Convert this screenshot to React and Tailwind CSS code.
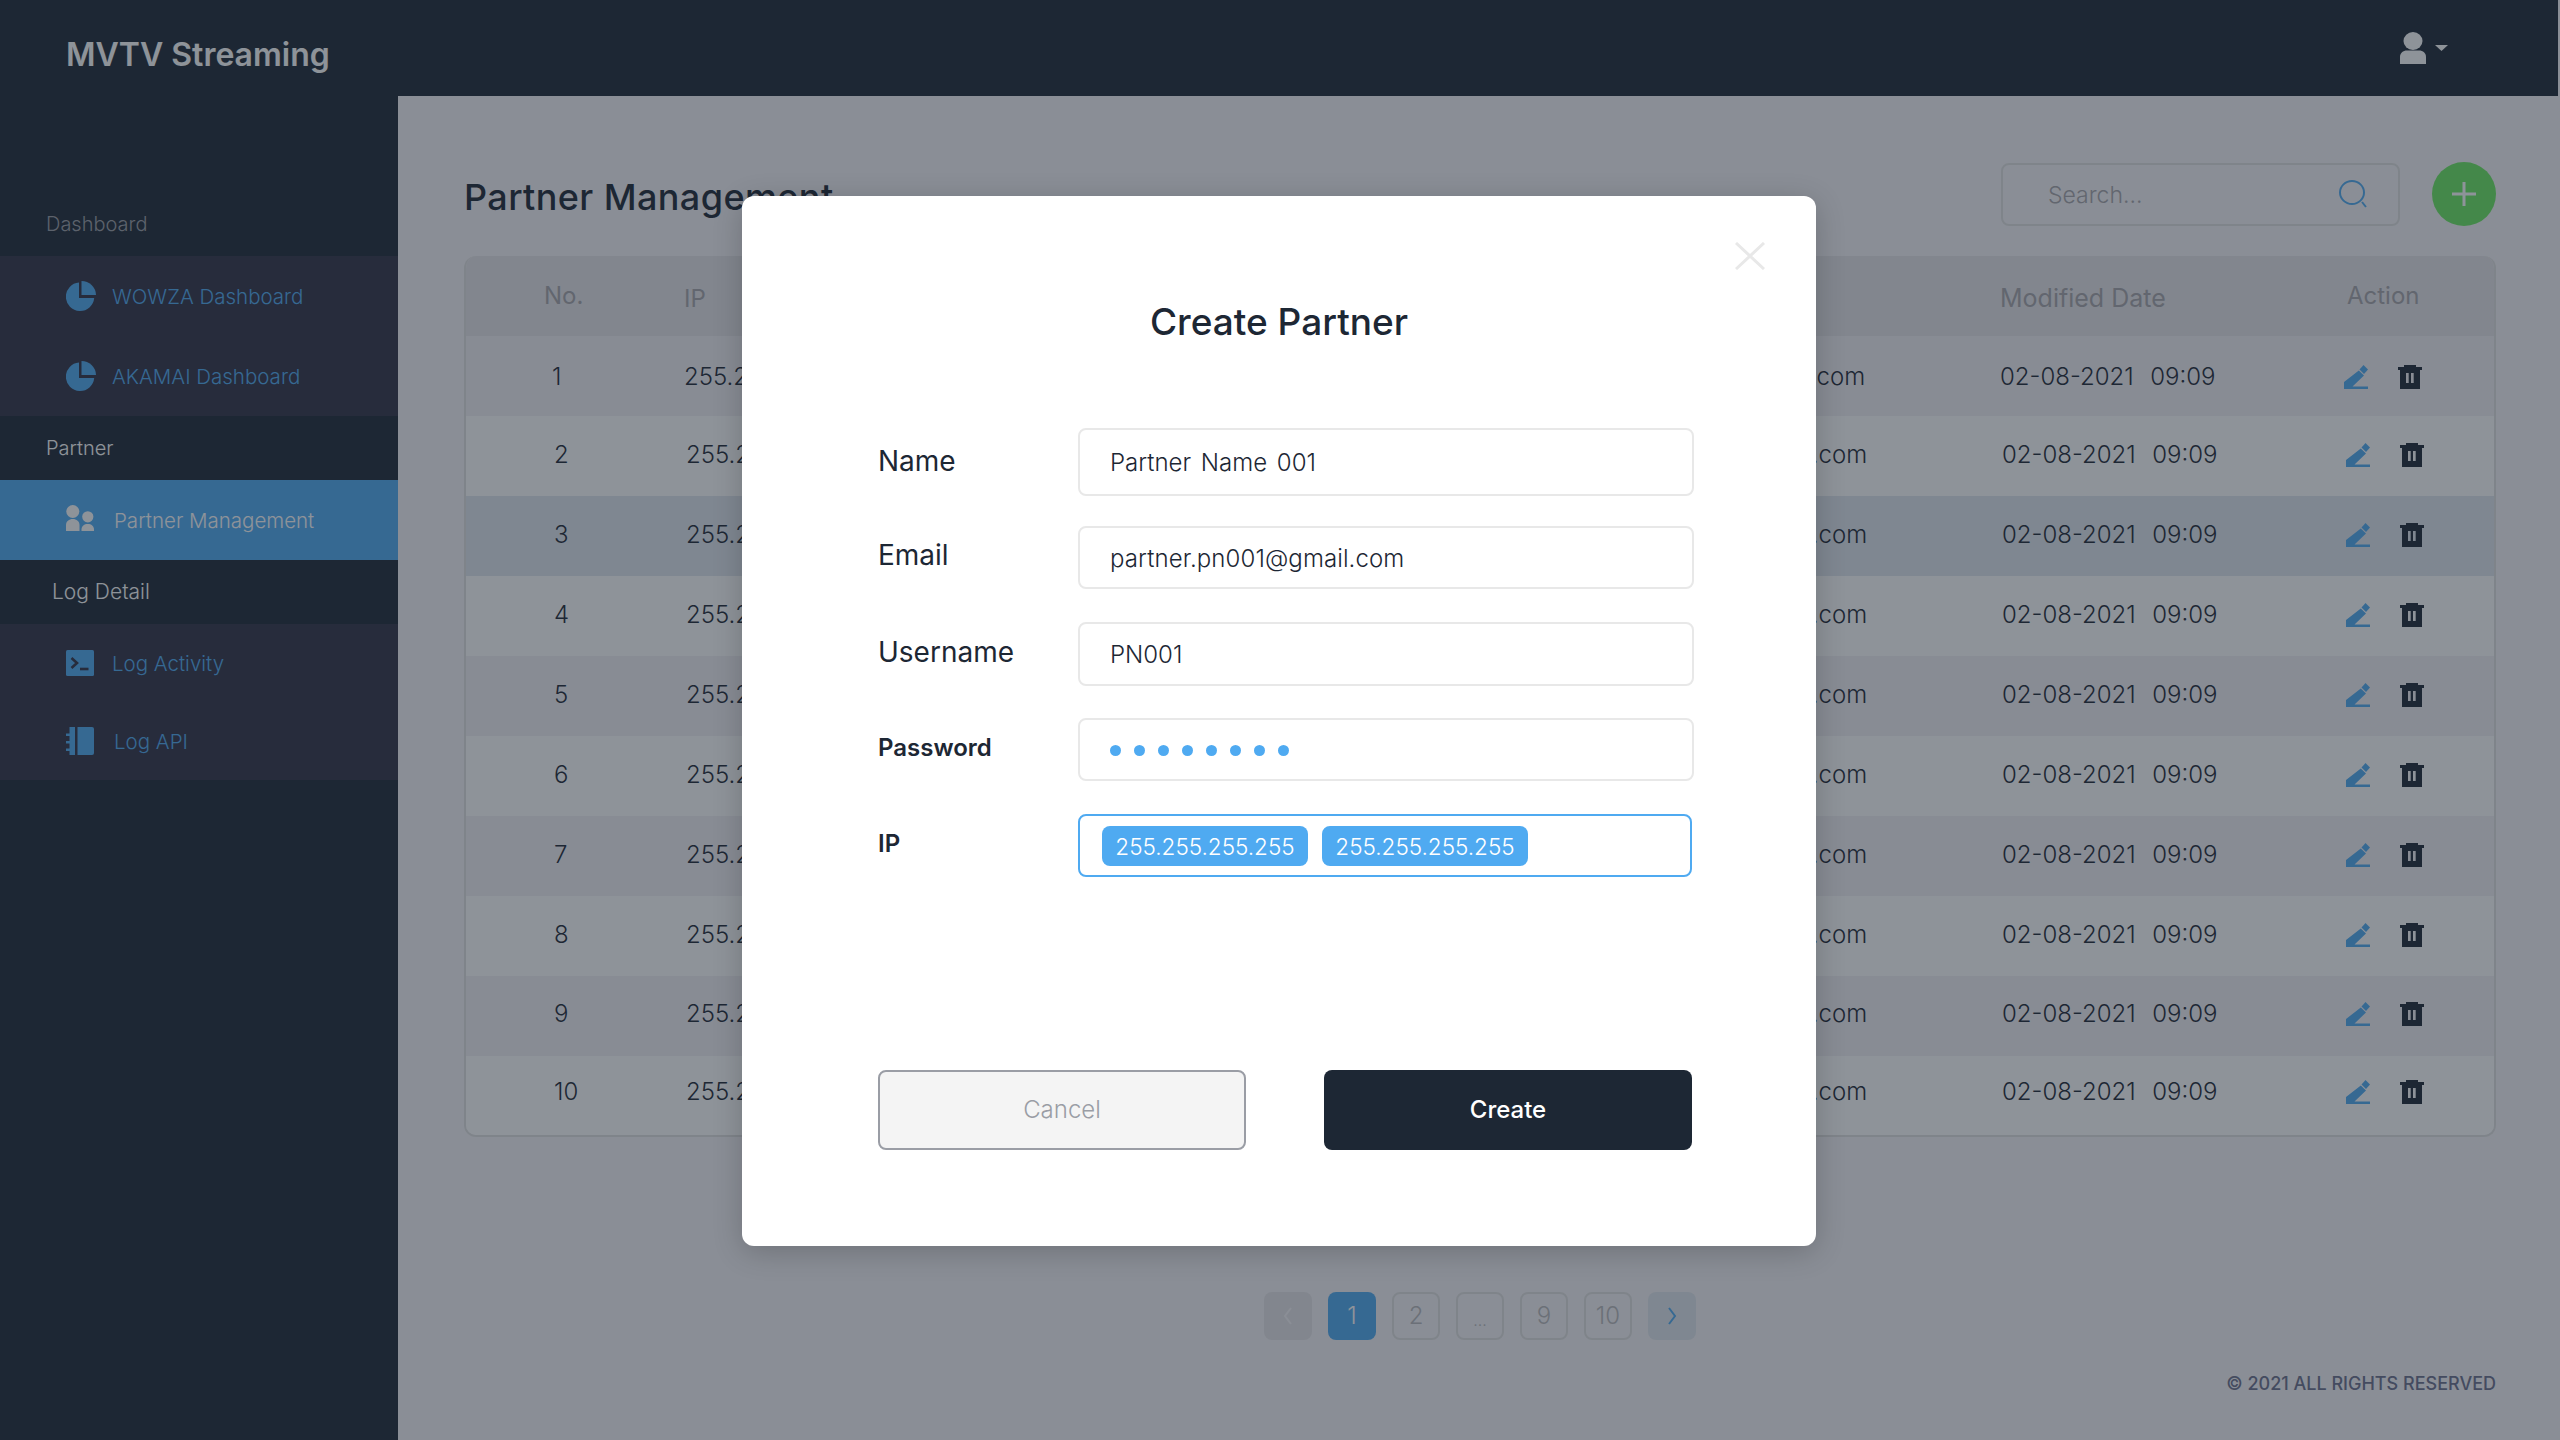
const rows = [1, 2, 3, 4, 5, 6, 7, 8, 9, 10];

const rowColors = {
  1: "bg-[#f3f1f4] pt-[2px]",
  2: "bg-white pb-[2px] pl-[2px]",
  3: "bg-[#e1e7ee] pb-[2px] pl-[2px]",
  4: "bg-white pb-[2px] pl-[2px]",
  5: "bg-[#f3f1f4] pb-[2px] pl-[2px]",
  6: "bg-white pb-[2px] pl-[2px]",
  7: "bg-[#f3f1f4] pb-[2px] pl-[2px]",
  8: "bg-white pb-[2px] pl-[2px]",
  9: "bg-[#f3f1f4] pb-[4px] pl-[2px]",
  10: "bg-white pb-[8px] pl-[2px]",
};

function PieIcon() {
  return (
    <svg viewBox="0 0 30 30" className="mr-4 h-[30px] w-[30px] shrink-0 fill-[#4faaf1]">
      <path d="M13 1.6V17h15.2A14.2 14.2 0 1 1 13 1.6Z" />
      <path d="M15.5 0A14.5 14.5 0 0 1 30 14H15.5Z" />
    </svg>
  );
}

function UsersIcon() {
  return (
    <svg viewBox="0 0 28 26" className="mr-5 -mt-1 h-[26px] w-[28px] shrink-0 fill-white">
      <circle cx="6.8" cy="6.5" r="6.5" />
      <path d="M0 26v-6c0-3.5 3-6 6.8-6s6.7 2.5 6.7 6v6Z" />
      <circle cx="21.8" cy="11.8" r="5.6" />
      <path d="M15.5 26v-1.5c0-3.5 2.8-5.5 6.3-5.5s6.2 2 6.2 5.5V26Z" />
    </svg>
  );
}

function TerminalIcon() {
  return (
    <svg viewBox="0 0 28 26" className="mr-[18px] h-[26px] w-[28px] shrink-0">
      <rect width="28" height="26" rx="1.5" fill="#4faaf1" />
      <path d="M5.5 8 11 13l-5.5 5" fill="none" stroke="#313144" strokeWidth="2.6" />
      <path d="M14 19h8.5" fill="none" stroke="#313144" strokeWidth="2.6" />
    </svg>
  );
}

function BookIcon() {
  return (
    <svg viewBox="0 0 28 28" className="mr-5 h-[28px] w-[28px] shrink-0 fill-[#4faaf1]">
      <path d="M3.5 0H9v28H3.5v-4H0v-2.5h3.5v-5H0V14h3.5V9H0V6.500h3.500Z" />
      <path d="M11.500 0H26a2 2 0 0 1 2 2v24a2 2 0 0 1-2 2H11.500Z" />
    </svg>
  );
}

function EditIcon() {
  return (
    <svg viewBox="0 0 24 24" className="h-6 w-6 fill-[#4faaf1]">
      <path d="M0 24v-7L14.800 5.500 20 10.500 8.500 21.500H24V24Z" />
      <path d="M15.500 4.500 19.500 0 24 4.500 20 9Z" />
    </svg>
  );
}

function TrashIcon() {
  return (
    <svg viewBox="0 0 24 24" className="h-6 w-6 fill-[#1d2734]">
      <path d="M6 0h12v2h6v3H0V2h6Z" />
      <path
        fillRule="evenodd"
        d="M2 5h20v19H2ZM8 8v10h2.700V8Zm5 0v10h2.700V8Z"
      />
    </svg>
  );
}

function MenuItem({ icon, label, active, className }) {
  return (
    <div
      className={`flex items-center pl-[66px] ${className} ${
        active ? "bg-[#4faaf1] text-white" : "text-[#4faaf1]"
      }`}
    >
      {icon}
      <span className="pt-[2px] text-[20.500px] leading-none font-light">{label}</span>
    </div>
  );
}

function Sidebar() {
  return (
    <aside className="w-[398px] shrink-0 bg-[#1d2734] pt-[96px]">
      <div className="flex h-16 items-center pl-[46px] text-[20px] font-light text-[#9b9da4]">
        Dashboard
      </div>
      <div className="bg-[#313144]">
        <MenuItem icon={<PieIcon />} label="WOWZA Dashboard" className="h-20" />
        <MenuItem icon={<PieIcon />} label="AKAMAI Dashboard" className="h-20" />
      </div>
      <div className="flex h-16 items-center pl-[46px] text-[20px] font-light text-white">
        Partner
      </div>
      <MenuItem icon={<UsersIcon />} label="Partner Management" active className="h-20" />
      <div className="flex h-16 items-center pl-[52px] text-[21px] font-light text-white">
        Log Detail
      </div>
      <div className="bg-[#313144]">
        <MenuItem icon={<TerminalIcon />} label="Log Activity" className="h-[78px]" />
        <MenuItem icon={<BookIcon />} label="Log API" className="h-[78px]" />
      </div>
    </aside>
  );
}

function Table() {
  const cols = "grid grid-cols-[218px_316px_573px_427px_344px_1fr] items-center";
  return (
    <div className="mt-[30px] h-[881px] overflow-hidden rounded-xl border-2 border-t-0 border-[#e1e1e1]">
      <div className={`${cols} h-20 bg-[#e7e5e8] text-[24px] font-normal text-[#a7a5aa]`}>
        <span className="pl-[78px]">No.</span>
        <span className="pt-[5px]">IP</span>
        <span>Name</span>
        <span>Email</span>
        <span className="pt-[5px] text-[25px]">Modified Date</span>
        <span className="pl-[3px]">Action</span>
      </div>
      {rows.map((row) => (
        <div
          key={row}
          className={`${cols} h-20 text-[24px] font-light text-[#1d2734] ${rowColors[row]}`}
        >
          <span className="pl-[86px]">{row}</span>
          <span>255.255.255.255</span>
          <span>Partner Name 001</span>
          <span className="truncate">partner.pn001@gmail.com</span>
          <span className="whitespace-pre [word-spacing:1.500px]">02-08-2021  09:09</span>
          <span className="flex gap-[30px]">
            <EditIcon />
            <TrashIcon />
          </span>
        </div>
      ))}
    </div>
  );
}

function PageButton({ children, className }) {
  return (
    <div
      className={`flex h-12 w-12 items-center justify-center rounded-lg text-[24px] font-light ${className}`}
    >
      {children}
    </div>
  );
}

function Pagination() {
  const plain = "border-2 border-[#e1e1e1] text-[#b9b9bc]";
  return (
    <div className="mt-[155px] flex justify-center gap-4">
      <PageButton className="bg-[#e7e5e8]">
        <svg viewBox="0 0 12 20" className="h-5 w-3 fill-none stroke-[#f7f5f8] stroke-2">
          <path d="M9 2 3 10l6 8" />
        </svg>
      </PageButton>
      <PageButton className="bg-[#4faaf1] text-white">1</PageButton>
      <PageButton className={plain}>2</PageButton>
      <PageButton className={`${plain} pt-2 !text-[16px]`}>...</PageButton>
      <PageButton className={plain}>9</PageButton>
      <PageButton className={plain}>10</PageButton>
      <PageButton className="bg-[#e1e7ee]">
        <svg viewBox="0 0 12 20" className="h-5 w-3 fill-none stroke-[#4faaf1] stroke-2">
          <path d="m3 2 6 8-6 8" />
        </svg>
      </PageButton>
    </div>
  );
}

const fields = [
  { label: "Name", value: "Partner Name 001", h: "h-[68px]", mt: "mt-0", labelShift: "-mt-[2px]", spacing: "[word-spacing:3px]" },
  { label: "Email", value: "partner.pn001@gmail.com", h: "h-[63px]", mt: "mt-[30px]", labelShift: "-mt-[6px]", spacing: "tracking-[0.1px]" },
  { label: "Username", value: "PN001", h: "h-[64px]", mt: "mt-[33px]", labelShift: "-mt-1", spacing: "" },
];

function CreateModal() {
  return (
    <div className="absolute inset-0 flex justify-center bg-[#1d2734]/50 pt-[196px] pr-[2px]">
      <div className="relative h-[1050px] w-[1074px] rounded-xl bg-white pt-[104px] pl-[136px] shadow-[0_6px_30px_rgba(0,0,0,0.2)]">
        <svg viewBox="0 0 30 28" className="absolute top-[46px] right-[51px] h-7 w-[30px] fill-none stroke-[#e8e8e8] stroke-[3]">
          <path d="m1 1 28 26M29 1 1 27" />
        </svg>
        <h2 className="pr-[136px] text-center text-[37px] leading-[44px] font-medium text-[#1d2734]">
          Create Partner
        </h2>
        <div className="mt-[84px]">
          {fields.map((field) => (
            <div
              key={field.label}
              className={`grid grid-cols-[200px_616px] items-center ${field.mt}`}
            >
              <label className={`text-[28px] font-normal text-[#1d2734] ${field.labelShift}`}>
                {field.label}
              </label>
              <div
                className={`flex items-center rounded-lg border-2 border-[#e8e8e8] pt-[2px] pl-[30px] text-[24px] font-light text-[#1d2734] ${field.h} ${field.spacing}`}
              >
                {field.value}
              </div>
            </div>
          ))}
          <div className="mt-[32px] grid grid-cols-[200px_616px] items-center">
            <label className="-mt-1 text-[24px] font-semibold text-[#1d2734]">Password</label>
            <div className="flex h-[63px] items-center gap-[13px] rounded-lg border-2 border-[#e8e8e8] pt-[2px] pl-[30px]">
              {[1, 2, 3, 4, 5, 6, 7, 8].map((dot) => (
                <span key={dot} className="h-[11px] w-[11px] rounded-full bg-[#4faaf1]" />
              ))}
            </div>
          </div>
          <div className="mt-[33px] grid grid-cols-[200px_614px] items-center">
            <label className="-mt-1 text-[24px] font-semibold text-[#1d2734]">IP</label>
            <div className="flex h-[63px] items-center gap-[14px] rounded-lg border-2 border-[#4faaf1] pl-[22px]">
              <span className="flex h-10 w-[206px] items-center justify-center rounded-lg bg-[#4faaf1] pt-[2px] text-[22.500px] font-light text-white">
                255.255.255.255
              </span>
              <span className="flex h-10 w-[206px] items-center justify-center rounded-lg bg-[#4faaf1] pt-[2px] text-[22.500px] font-light text-white">
                255.255.255.255
              </span>
            </div>
          </div>
        </div>
        <div className="mt-[193px] flex gap-[78px]">
          <button className="h-20 w-[368px] rounded-lg border-2 border-[#9a9da5] bg-[#f4f4f4] text-[24px] font-light text-[#9a9da5]">
            Cancel
          </button>
          <button className="h-20 w-[368px] rounded-lg bg-[#1d2734] text-[24px] font-medium text-white">
            Create
          </button>
        </div>
      </div>
    </div>
  );
}

export default function App() {
  return (
    <div
      className="relative flex h-[1440px] flex-col overflow-hidden bg-[#f7f5f8]"
      style={{ fontFamily: "Inter, 'Noto Sans', sans-serif" }}
    >
      <header className="mr-[2px] flex h-24 shrink-0 items-center justify-between bg-[#1d2734] pr-[110px] pl-[66px]">
        <span className="pt-[14px] text-[32px] font-semibold text-white">MVTV Streaming</span>
        <span className="flex items-center gap-[9px]">
          <svg viewBox="0 0 26 32" className="h-8 w-[26px] fill-white">
            <ellipse cx="13" cy="9" rx="9.500" ry="9" />
            <path d="M0 32v-7c0-4 3-6.500 7-6.500h12c4 0 7 2.500 7 6.500v7Z" />
          </svg>
          <svg viewBox="0 0 13 6" className="h-1.5 w-[13px] fill-white">
            <path d="M0 0h13L6.500 6Z" />
          </svg>
        </span>
      </header>
      <div className="flex flex-1">
        <Sidebar />
        <main className="flex-1 pt-[66px] pr-[64px] pl-[66px]">
          <div className="flex h-16 items-center justify-between">
            <h1 className="pt-[5px] text-[36px] tracking-[0.4px] font-medium text-[#1d2734]">
              Partner Management
            </h1>
            <div className="flex items-center gap-[32px]">
              <div className="flex h-[63px] w-[399px] items-center justify-between rounded-lg border-2 border-[#e1e1e1] pr-[31px] pl-[45px] text-[23px] font-light text-[#a7a5aa]">
                <span className="pt-[2px]">Search...</span>
                <svg viewBox="0 0 28 28" className="h-7 w-7 fill-none stroke-[#4faaf1] stroke-2">
                  <ellipse cx="13" cy="12.500" rx="12" ry="11.500" />
                  <path d="m23 22 4 5" />
                </svg>
              </div>
              <div className="flex h-16 w-16 items-center justify-center rounded-full bg-[#6be960]">
                <svg viewBox="0 0 24 24" className="h-6 w-6 fill-none stroke-white stroke-[3]">
                  <path d="M12 0v24M0 12h24" />
                </svg>
              </div>
            </div>
          </div>
          <Table />
          <Pagination />
          <p className="mt-[30px] text-right text-[18px] font-medium text-[#6b6f8c]">
            © 2021 ALL RIGHTS RESERVED
          </p>
        </main>
      </div>
      <CreateModal />
    </div>
  );
}
